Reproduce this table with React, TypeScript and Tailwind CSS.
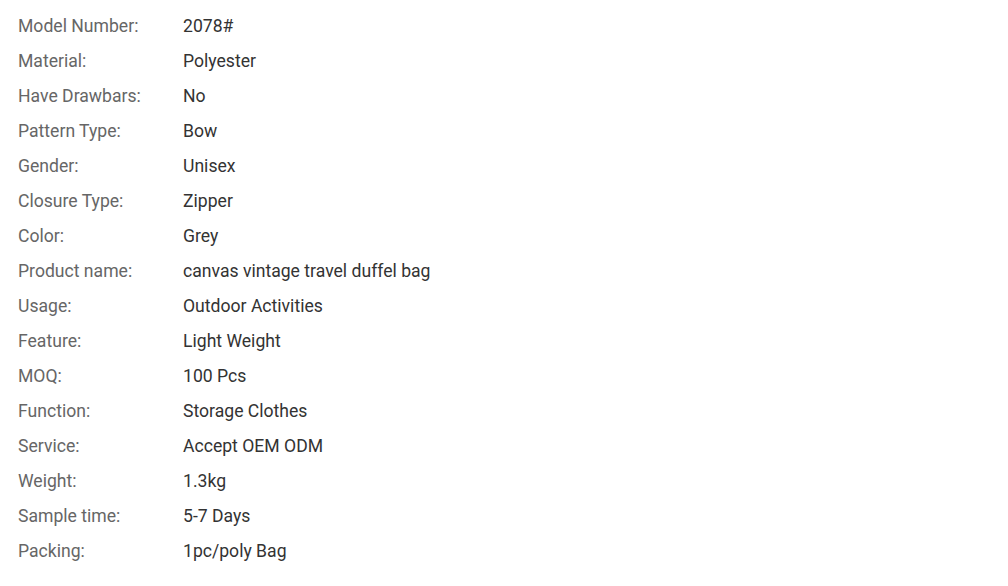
import React from 'react';

const SPECS = [
  ['Model Number:', '2078#'],
  ['Material:', 'Polyester'],
  ['Have Drawbars:', 'No'],
  ['Pattern Type:', 'Bow'],
  ['Gender:', 'Unisex'],
  ['Closure Type:', 'Zipper'],
  ['Color:', 'Grey'],
  ['Product name:', 'canvas vintage travel duffel bag'],
  ['Usage:', 'Outdoor Activities'],
  ['Feature:', 'Light Weight'],
  ['MOQ:', '100 Pcs'],
  ['Function:', 'Storage Clothes'],
  ['Service:', 'Accept OEM ODM'],
  ['Weight:', '1.3kg'],
  ['Sample time:', '5-7 Days'],
  ['Packing:', '1pc/poly Bag'],
];

export default function App() {
  return (
    <div className="min-h-screen bg-white pl-[18px] pt-[9px] font-['Roboto',sans-serif] text-[17.6px]">
      {SPECS.map(([label, value]) => (
        <div key={label} className="flex h-[35px] items-center">
          <span className="w-[165px] shrink-0 text-[#666666]">{label}</span>
          <span className="text-[#333333]">{value}</span>
        </div>
      ))}
    </div>
  );
}
